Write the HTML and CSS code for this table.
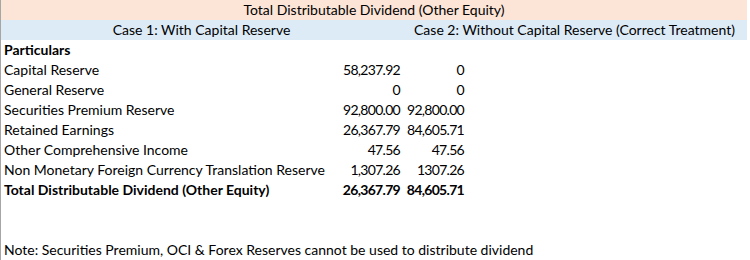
FILE: index.html
```html
<!DOCTYPE html>
<html>
<head>
<meta charset="utf-8">
<link rel="stylesheet" href="styles.css">
</head>
<body>
<div class="sheet">
  <div class="row title">Total Distributable Dividend (Other Equity)</div>
  <div class="row cases">
    <div class="case">Case 1: With Capital Reserve</div>
    <div class="case">Case 2: Without Capital Reserve (Correct Treatment)</div>
  </div>
  <div class="row data bold"><div class="lbl">Particulars</div><div class="num"></div><div class="num"></div></div>
  <div class="row data"><div class="lbl">Capital Reserve</div><div class="num">58,237.92</div><div class="num">0</div></div>
  <div class="row data"><div class="lbl">General Reserve</div><div class="num">0</div><div class="num">0</div></div>
  <div class="row data"><div class="lbl">Securities Premium Reserve</div><div class="num">92,800.00</div><div class="num">92,800.00</div></div>
  <div class="row data"><div class="lbl">Retained Earnings</div><div class="num">26,367.79</div><div class="num">84,605.71</div></div>
  <div class="row data"><div class="lbl">Other Comprehensive Income</div><div class="num">47.56</div><div class="num">47.56</div></div>
  <div class="row data"><div class="lbl">Non Monetary Foreign Currency Translation Reserve</div><div class="num">1,307.26</div><div class="num">1307.26</div></div>
  <div class="row data bold"><div class="lbl">Total Distributable Dividend (Other Equity)</div><div class="num">26,367.79</div><div class="num">84,605.71</div></div>
  <div class="row"></div>
  <div class="row"></div>
  <div class="row note">Note: Securities Premium, OCI &amp; Forex Reserves cannot be used to distribute dividend</div>
</div>
</body>
</html>
```
FILE: styles.css
```css
html, body {
  margin: 0;
  padding: 0;
  background: #fff;
}
.sheet {
  width: 746px;
  height: 260px;
  border-left: 1px solid #a6a6a6;
  font-family: Lato, "Liberation Sans", sans-serif;
  font-size: 14px;
  color: #000;
}
.row {
  height: 20px;
  line-height: 20px;
  white-space: nowrap;
}
.title {
  background: #fce4d6;
  text-align: center;
}
.cases {
  background: #ddebf7;
  display: grid;
  grid-template-columns: 401px 1fr;
}
.case {
  text-align: center;
}
.data {
  display: grid;
  grid-template-columns: 329px 72px 64px;
}
.lbl {
  padding-left: 3px;
}
.num {
  text-align: right;
  padding-right: 2px;
  letter-spacing: -0.7px;
}
.bold {
  font-weight: bold;
}
.note {
  padding-left: 3px;
}
```
